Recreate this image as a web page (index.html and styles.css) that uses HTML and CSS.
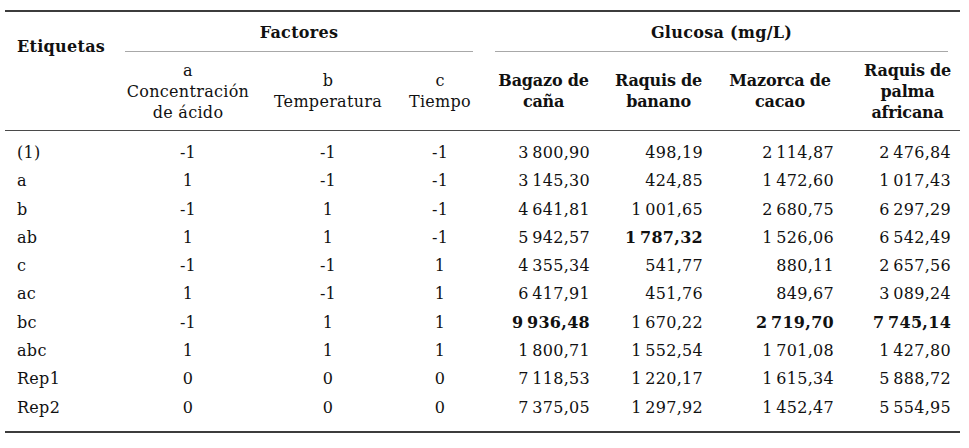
FILE: index.html
```html
<!DOCTYPE html>
<html lang="es">
<head>
<meta charset="utf-8">
<title>Tabla</title>
<link rel="stylesheet" href="styles.css">
</head>
<body>
<table class="tbl">
  <colgroup>
    <col class="c-lab"><col class="c-a"><col class="c-b"><col class="c-c">
    <col class="c-g1"><col class="c-g2"><col class="c-g3"><col class="c-g4">
  </colgroup>
  <thead>
    <tr class="h1">
      <th class="lab" rowspan="2">Etiquetas</th>
      <th class="grp" colspan="3"><div class="cmid cmid-f">Factores</div></th>
      <th class="grp" colspan="4"><div class="cmid cmid-g">Glucosa (mg/L)</div></th>
    </tr>
    <tr class="h2">
      <th class="fac">a<br>Concentración<br>de ácido</th>
      <th class="fac">b<br>Temperatura</th>
      <th class="fac">c<br>Tiempo</th>
      <th class="num g1 bold">Bagazo de<br>caña</th>
      <th class="num g2 bold">Raquis de<br>banano</th>
      <th class="num g3 bold">Mazorca de<br>cacao</th>
      <th class="num g4 bold">Raquis de<br>palma<br>africana</th>
    </tr>
  </thead>
  <tbody>
    <tr class="first"><td class="lab">(1)</td><td class="f">-1</td><td class="f">-1</td><td class="f">-1</td><td class="n g1">3&thinsp;800,90</td><td class="n g2">498,19</td><td class="n g3">2&thinsp;114,87</td><td class="n g4">2&thinsp;476,84</td></tr>
    <tr><td class="lab">a</td><td class="f">1</td><td class="f">-1</td><td class="f">-1</td><td class="n g1">3&thinsp;145,30</td><td class="n g2">424,85</td><td class="n g3">1&thinsp;472,60</td><td class="n g4">1&thinsp;017,43</td></tr>
    <tr><td class="lab">b</td><td class="f">-1</td><td class="f">1</td><td class="f">-1</td><td class="n g1">4&thinsp;641,81</td><td class="n g2">1&thinsp;001,65</td><td class="n g3">2&thinsp;680,75</td><td class="n g4">6&thinsp;297,29</td></tr>
    <tr><td class="lab">ab</td><td class="f">1</td><td class="f">1</td><td class="f">-1</td><td class="n g1">5&thinsp;942,57</td><td class="n g2 bold">1&thinsp;787,32</td><td class="n g3">1&thinsp;526,06</td><td class="n g4">6&thinsp;542,49</td></tr>
    <tr><td class="lab">c</td><td class="f">-1</td><td class="f">-1</td><td class="f">1</td><td class="n g1">4&thinsp;355,34</td><td class="n g2">541,77</td><td class="n g3">880,11</td><td class="n g4">2&thinsp;657,56</td></tr>
    <tr><td class="lab">ac</td><td class="f">1</td><td class="f">-1</td><td class="f">1</td><td class="n g1">6&thinsp;417,91</td><td class="n g2">451,76</td><td class="n g3">849,67</td><td class="n g4">3&thinsp;089,24</td></tr>
    <tr><td class="lab">bc</td><td class="f">-1</td><td class="f">1</td><td class="f">1</td><td class="n g1 bold">9&thinsp;936,48</td><td class="n g2">1&thinsp;670,22</td><td class="n g3 bold">2&thinsp;719,70</td><td class="n g4 bold">7&thinsp;745,14</td></tr>
    <tr><td class="lab">abc</td><td class="f">1</td><td class="f">1</td><td class="f">1</td><td class="n g1">1&thinsp;800,71</td><td class="n g2">1&thinsp;552,54</td><td class="n g3">1&thinsp;701,08</td><td class="n g4">1&thinsp;427,80</td></tr>
    <tr><td class="lab">Rep1</td><td class="f">0</td><td class="f">0</td><td class="f">0</td><td class="n g1">7&thinsp;118,53</td><td class="n g2">1&thinsp;220,17</td><td class="n g3">1&thinsp;615,34</td><td class="n g4">5&thinsp;888,72</td></tr>
    <tr class="last"><td class="lab">Rep2</td><td class="f">0</td><td class="f">0</td><td class="f">0</td><td class="n g1">7&thinsp;375,05</td><td class="n g2">1&thinsp;297,92</td><td class="n g3">1&thinsp;452,47</td><td class="n g4">5&thinsp;554,95</td></tr>
  </tbody>
</table>
</body>
</html>
```

FILE: styles.css
```css
html, body {
  margin: 0;
  padding: 0;
  background: #ffffff;
}

body {
  font-family: "DejaVu Serif", "Liberation Serif", serif;
  font-size: 16px;
  color: #111111;
  letter-spacing: 0.3px;
}

.tbl {
  border-collapse: collapse;
  table-layout: fixed;
  width: 955px;
  margin: 10px 0 0 5px;
}

.c-lab { width: 109px; }
.c-a { width: 148px; }
.c-b { width: 132px; }
.c-c { width: 92px; }
.c-g1 { width: 116px; }
.c-g2 { width: 113px; }
.c-g3 { width: 131px; }
.c-g4 { width: 114px; }

.tbl th, .tbl td {
  padding: 0;
  font-weight: normal;
  white-space: nowrap;
}

.bold { font-weight: bold !important; }

.h1 th {
  border-top: 2px solid #3c3c3c;
}

.lab {
  text-align: left;
  padding-left: 12px !important;
}

thead .lab {
  font-weight: bold;
  vertical-align: top;
  line-height: 21px;
  padding-top: 24px !important;
  border-bottom: 1.5px solid #4a4a4a;
}

.grp {
  vertical-align: top;
  padding-top: 10px !important;
}

.cmid {
  font-weight: bold;
  line-height: 21px;
  padding-bottom: 8px;
  border-bottom: 1.5px solid #a8a8a8;
  text-align: center;
}

.cmid-f { margin: 0 13px 0 11px; }
.cmid-g { margin: 0 12px 0 9px; }

.h2 th {
  height: 78px;
  line-height: 21px;
  vertical-align: middle;
  text-align: center;
  border-bottom: 1.5px solid #4a4a4a;
}

.h2 .num {
  text-align: center;
  letter-spacing: -0.2px;
}

tbody td {
  line-height: 28.3px;
}

tbody .first td { padding-top: 8px; }
tbody .last td {
  padding-bottom: 9px;
  border-bottom: 2px solid #3c3c3c;
}

.f { text-align: center; }
.n { text-align: right; }

.g1 { padding-left: 11px !important; padding-right: 12px !important; }
.g2 { padding-left: 12px !important; padding-right: 12px !important; }
.g3 { padding-left: 11px !important; padding-right: 12px !important; }
.g4 { padding-left: 16px !important; padding-right: 9px !important; }

.h2 .g4 { padding-left: 15px !important; padding-right: 6px !important; }
```
